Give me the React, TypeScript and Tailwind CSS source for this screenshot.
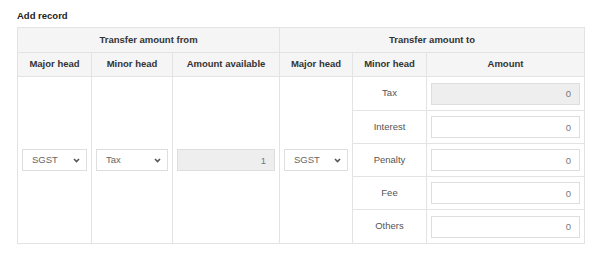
import React from 'react';

const font = { fontFamily: '"Liberation Sans", Arial, sans-serif' };

function Chevron() {
  return (
    <svg width="7" height="5" viewBox="0 0 7 5" className="flex-shrink-0">
      <polyline points="1,1 3.5,3.6 6,1" fill="none" stroke="#555" strokeWidth="1.6" />
    </svg>
  );
}

function FakeSelect({ value }: { value: string }) {
  return (
    <div className="flex h-[22px] w-full items-center justify-between border border-[#dedede] bg-white pl-[9px] pr-[6px] text-[#666]">
      <span>{value}</span>
      <Chevron />
    </div>
  );
}

function AmountInput({ value, disabled }: { value: string; disabled?: boolean }) {
  return (
    <input
      readOnly
      value={value}
      className={`block h-[22px] w-full border border-[#dedede] pr-[8px] text-right text-[#777] outline-none ${
        disabled ? 'bg-[#eeeeee]' : 'bg-white'
      }`}
    />
  );
}

const minorHeads = ['Tax', 'Interest', 'Penalty', 'Fee', 'Others'];

export default function App() {
  return (
    <div className="min-h-[258px] w-[600px] bg-white pl-[17px] text-[9.5px]" style={font}>
      <div className="pt-[10px] pb-[5px] font-bold leading-[12px] text-[#222]">Add record</div>
      <table className="w-[568px] table-fixed border-collapse border border-[#e3e3e3]">
        <colgroup>
          <col className="w-[74px]" />
          <col className="w-[81px]" />
          <col className="w-[107px]" />
          <col className="w-[73px]" />
          <col className="w-[74px]" />
          <col />
        </colgroup>
        <thead className="bg-[#f5f5f5] font-bold text-[#333]">
          <tr className="h-[25px]">
            <th colSpan={3} className="border border-[#e3e3e3] text-center">
              Transfer amount from
            </th>
            <th colSpan={3} className="border border-[#e3e3e3] text-center">
              Transfer amount to
            </th>
          </tr>
          <tr className="h-[24px]">
            <th className="border border-[#e3e3e3]">Major head</th>
            <th className="border border-[#e3e3e3]">Minor head</th>
            <th className="border border-[#e3e3e3]">Amount available</th>
            <th className="border border-[#e3e3e3]">Major head</th>
            <th className="border border-[#e3e3e3]">Minor head</th>
            <th className="border border-[#e3e3e3]">Amount</th>
          </tr>
        </thead>
        <tbody className="text-[#555]">
          {minorHeads.map((head, i) => (
            <tr key={head} className={i === 0 || i === 4 ? 'h-[34px]' : 'h-[33px]'}>
              {i === 0 && (
                <>
                  <td rowSpan={5} className="border border-[#e3e3e3] px-[4px] align-middle">
                    <FakeSelect value="SGST" />
                  </td>
                  <td rowSpan={5} className="border border-[#e3e3e3] px-[4px] align-middle">
                    <FakeSelect value="Tax" />
                  </td>
                  <td rowSpan={5} className="border border-[#e3e3e3] px-[4px] align-middle">
                    <AmountInput value="1" disabled />
                  </td>
                  <td rowSpan={5} className="border border-[#e3e3e3] px-[4px] align-middle">
                    <FakeSelect value="SGST" />
                  </td>
                </>
              )}
              <td className="border border-[#e3e3e3] text-center">{head}</td>
              <td className="border border-[#e3e3e3] px-[4px] py-[5px]">
                <AmountInput value="0" disabled={i === 0} />
              </td>
            </tr>
          ))}
        </tbody>
      </table>
    </div>
  );
}
